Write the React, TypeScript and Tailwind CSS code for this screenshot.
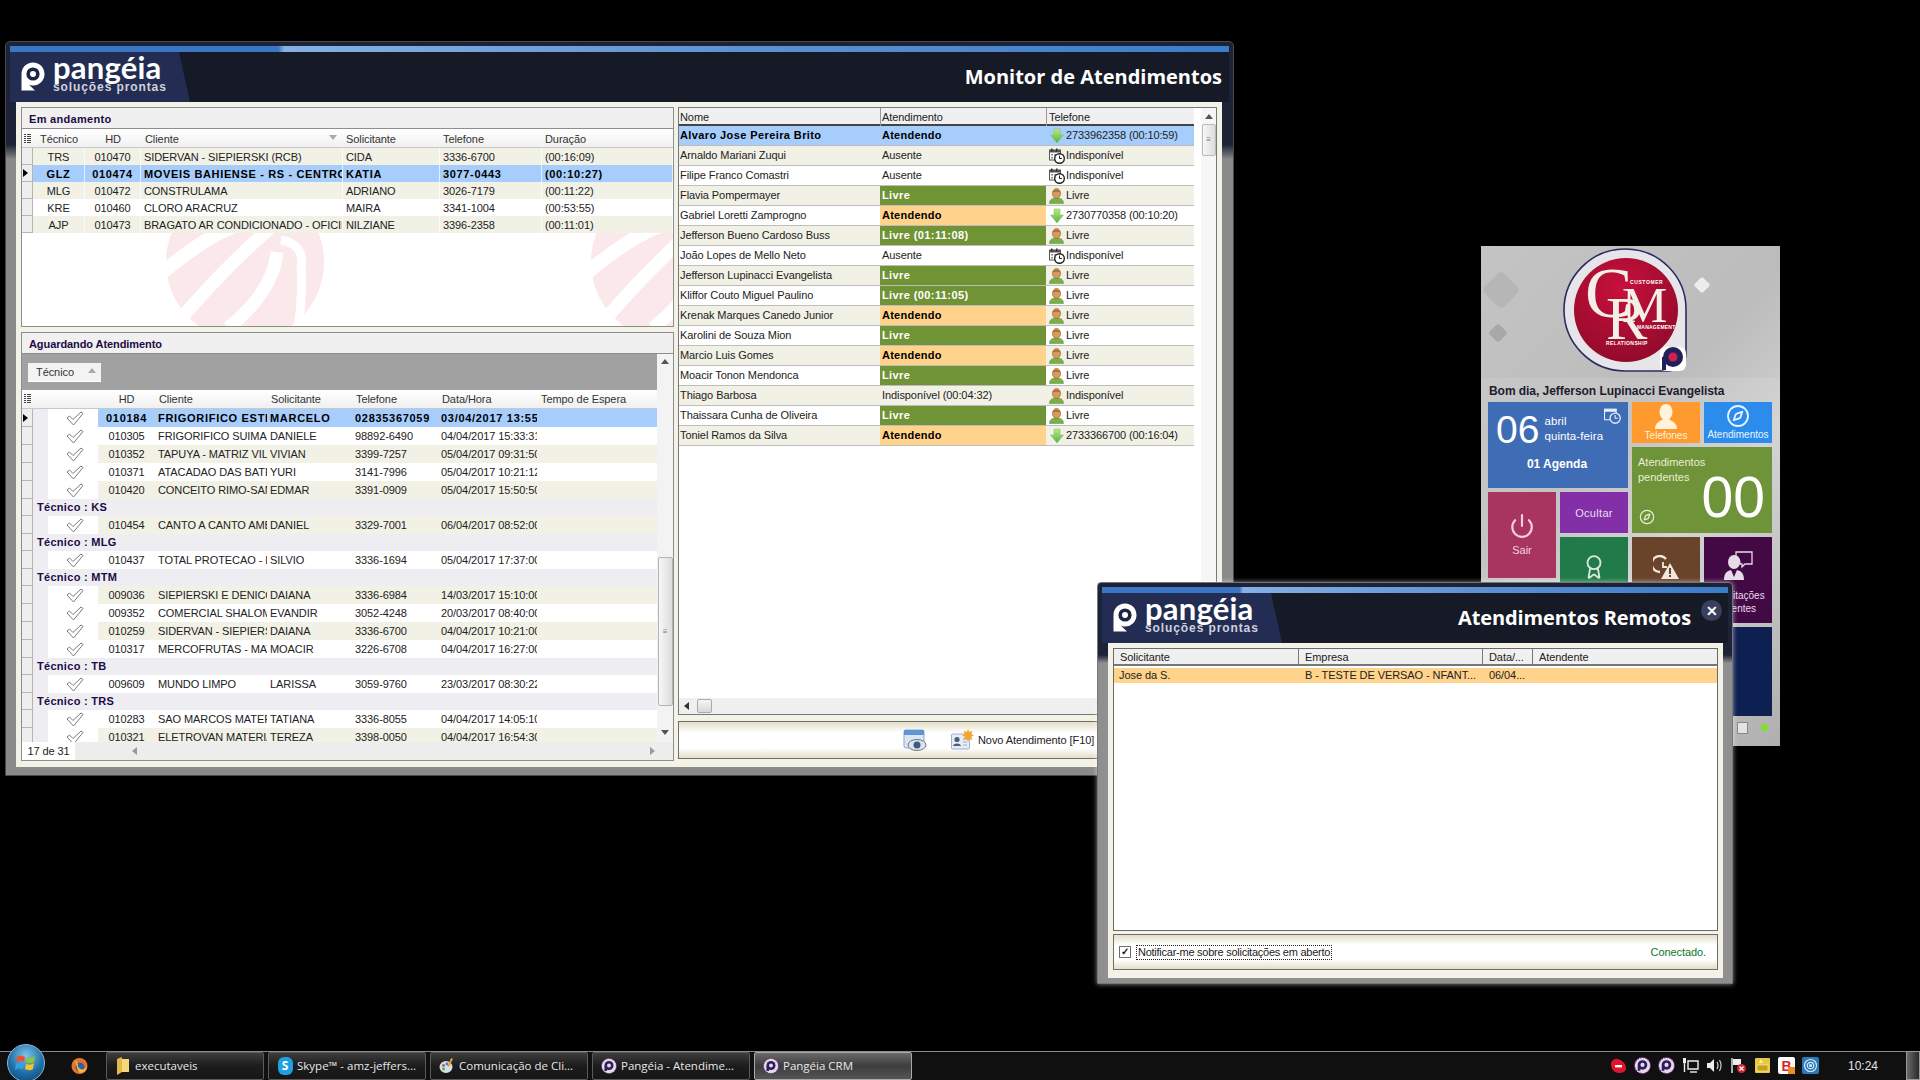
import React from 'react';
import { Award, Compass, Power } from 'lucide-react';

const active = [
  ['TRS', '010470', 'SIDERVAN - SIEPIERSKI (RCB)', 'CIDA', '3336-6700', '(00:16:09)'],
  ['GLZ', '010474', 'MOVEIS BAHIENSE - RS - CENTRO', 'KATIA', '3077-0443', '(00:10:27)'],
  ['MLG', '010472', 'CONSTRULAMA', 'ADRIANO', '3026-7179', '(00:11:22)'],
  ['KRE', '010460', 'CLORO ARACRUZ', 'MAIRA', '3341-1004', '(00:53:55)'],
  ['AJP', '010473', 'BRAGATO AR CONDICIONADO - OFICINA', 'NILZIANE', '3396-2358', '(00:11:01)'],
];

type Waiting = { group: string } | { row: string[]; bg: string; selected?: boolean };

const waiting: Waiting[] = [
  { row: ['010184', 'FRIGORIFICO ESTRELA', 'MARCELO', '02835367059', '03/04/2017 13:55:10'], bg: 'bg-[#a6cdfb]', selected: true },
  { row: ['010305', 'FRIGORIFICO SUIMAX', 'DANIELE', '98892-6490', '04/04/2017 15:33:31'], bg: 'bg-white' },
  { row: ['010352', 'TAPUYA - MATRIZ VILA', 'VIVIAN', '3399-7257', '05/04/2017 09:31:50'], bg: 'bg-[#f1f1e6]' },
  { row: ['010371', 'ATACADAO DAS BATERIAS', 'YURI', '3141-7996', '05/04/2017 10:21:12'], bg: 'bg-white' },
  { row: ['010420', 'CONCEITO RIMO-SANTOS', 'EDMAR', '3391-0909', '05/04/2017 15:50:50'], bg: 'bg-[#f1f1e6]' },
  { group: 'KS' },
  { row: ['010454', 'CANTO A CANTO AMBIENTES', 'DANIEL', '3329-7001', '06/04/2017 08:52:00'], bg: 'bg-[#f1f1e6]' },
  { group: 'MLG' },
  { row: ['010437', 'TOTAL PROTECAO - ES', 'SILVIO', '3336-1694', '05/04/2017 17:37:00'], bg: 'bg-white' },
  { group: 'MTM' },
  { row: ['009036', 'SIEPIERSKI E DENICOLI', 'DAIANA', '3336-6984', '14/03/2017 15:10:00'], bg: 'bg-[#f1f1e6]' },
  { row: ['009352', 'COMERCIAL SHALOM', 'EVANDIR', '3052-4248', '20/03/2017 08:40:00'], bg: 'bg-white' },
  { row: ['010259', 'SIDERVAN - SIEPIERSKI', 'DAIANA', '3336-6700', '04/04/2017 10:21:00'], bg: 'bg-[#f1f1e6]' },
  { row: ['010317', 'MERCOFRUTAS - MATRIZ', 'MOACIR', '3226-6708', '04/04/2017 16:27:00'], bg: 'bg-white' },
  { group: 'TB' },
  { row: ['009609', 'MUNDO LIMPO', 'LARISSA', '3059-9760', '23/03/2017 08:30:22'], bg: 'bg-white' },
  { group: 'TRS' },
  { row: ['010283', 'SAO MARCOS MATERIAIS', 'TATIANA', '3336-8055', '04/04/2017 14:05:10'], bg: 'bg-white' },
  { row: ['010321', 'ELETROVAN MATERIAIS', 'TEREZA', '3398-0050', '04/04/2017 16:54:30'], bg: 'bg-[#f1f1e6]' },
];

type Status = 'livre' | 'atendendo' | 'plain';
type Phone = 'call' | 'away' | 'user';

const people: { name: string; status: Status; label: string; phone: Phone; detail: string }[] = [
  { name: 'Alvaro Jose Pereira Brito', status: 'plain', label: 'Atendendo', phone: 'call', detail: '2733962358 (00:10:59)' },
  { name: 'Arnaldo Mariani Zuqui', status: 'plain', label: 'Ausente', phone: 'away', detail: 'Indisponível' },
  { name: 'Filipe Franco Comastri', status: 'plain', label: 'Ausente', phone: 'away', detail: 'Indisponível' },
  { name: 'Flavia Pompermayer', status: 'livre', label: 'Livre', phone: 'user', detail: 'Livre' },
  { name: 'Gabriel Loretti Zamprogno', status: 'atendendo', label: 'Atendendo', phone: 'call', detail: '2730770358 (00:10:20)' },
  { name: 'Jefferson Bueno Cardoso Buss', status: 'livre', label: 'Livre (01:11:08)', phone: 'user', detail: 'Livre' },
  { name: 'João Lopes de Mello Neto', status: 'plain', label: 'Ausente', phone: 'away', detail: 'Indisponível' },
  { name: 'Jefferson Lupinacci Evangelista', status: 'livre', label: 'Livre', phone: 'user', detail: 'Livre' },
  { name: 'Kliffor Couto Miguel Paulino', status: 'livre', label: 'Livre (00:11:05)', phone: 'user', detail: 'Livre' },
  { name: 'Krenak Marques Canedo Junior', status: 'atendendo', label: 'Atendendo', phone: 'user', detail: 'Livre' },
  { name: 'Karolini de Souza Mion', status: 'livre', label: 'Livre', phone: 'user', detail: 'Livre' },
  { name: 'Marcio Luis Gomes', status: 'atendendo', label: 'Atendendo', phone: 'user', detail: 'Livre' },
  { name: 'Moacir Tonon Mendonca', status: 'livre', label: 'Livre', phone: 'user', detail: 'Livre' },
  { name: 'Thiago Barbosa', status: 'plain', label: 'Indisponível (00:04:32)', phone: 'user', detail: 'Indisponível' },
  { name: 'Thaissara Cunha de Oliveira', status: 'livre', label: 'Livre', phone: 'user', detail: 'Livre' },
  { name: 'Toniel Ramos da Silva', status: 'atendendo', label: 'Atendendo', phone: 'call', detail: '2733366700 (00:16:04)' },
];

function Tri({ dir, color = '#555' }: { dir: 'up' | 'down' | 'left' | 'right'; color?: string }) {
  const points = { up: '0,5 4,0 8,5', down: '0,0 8,0 4,5', left: '5,0 5,8 0,4', right: '0,0 5,4 0,8' }[dir];
  return (
    <svg width="8" height="8" viewBox="0 0 8 8">
      <polygon points={points} fill={color} />
    </svg>
  );
}

function GripIcon() {
  return (
    <svg width="7" height="11" viewBox="0 0 7 11" fill="#444">
      <rect x="0" y="0" width="2" height="1" />
      <rect x="3" y="0" width="4" height="1" />
      <rect x="0" y="2" width="2" height="1" />
      <rect x="3" y="2" width="4" height="1" />
      <rect x="0" y="4" width="2" height="1" />
      <rect x="3" y="4" width="4" height="1" />
      <rect x="0" y="6" width="2" height="1" />
      <rect x="3" y="6" width="4" height="1" />
      <rect x="0" y="8" width="2" height="1" />
      <rect x="3" y="8" width="4" height="1" />
    </svg>
  );
}

function CheckIcon() {
  return (
    <svg width="18" height="15" viewBox="0 0 18 15">
      <path d="M1 7 L3.5 5 L7 8.5 L15 1 L17 2.5 L7.5 14 Z" fill="#fff" stroke="#7b7b7b" strokeWidth="1" />
    </svg>
  );
}

function CallIcon() {
  return (
    <svg width="14" height="16" viewBox="0 0 14 16">
      <defs>
        <linearGradient id="callGreen" x1="0" y1="0" x2="0" y2="1">
          <stop offset="0" stopColor="#bfe87f" />
          <stop offset="1" stopColor="#4fb648" />
        </linearGradient>
      </defs>
      <path d="M4 1 H10 V7 H13.5 L7 15 L0.5 7 H4 Z" fill="url(#callGreen)" stroke="#7cc060" strokeWidth="0.5" />
    </svg>
  );
}

function AwayIcon() {
  return (
    <svg width="16" height="16" viewBox="0 0 16 16" className="shrink-0">
      <rect x="0.5" y="2" width="11" height="10" fill="#fff" stroke="#555" />
      <rect x="0.5" y="2" width="11" height="2.5" fill="#555" />
      <rect x="2" y="0.5" width="1.5" height="3" fill="#333" />
      <rect x="7" y="0.5" width="1.5" height="3" fill="#333" />
      <rect x="2" y="6" width="2" height="1.5" fill="#888" />
      <rect x="5" y="6" width="2" height="1.5" fill="#888" />
      <rect x="2" y="9" width="2" height="1.5" fill="#888" />
      <circle cx="10.5" cy="10.5" r="4.8" fill="#fff" stroke="#222" strokeWidth="1.4" />
      <path d="M10.5 7.5 V10.5 H13" fill="none" stroke="#222" strokeWidth="1" />
    </svg>
  );
}

function UserIcon() {
  return (
    <svg width="15" height="16" viewBox="0 0 15 16">
      <path d="M0.5 15.5 C0.5 11.5 3 10.5 5.5 10 H9.5 C12 10.5 14.5 11.5 14.5 15.5 Z" fill="#78b04a" stroke="#5b8f36" strokeWidth="0.5" />
      <ellipse cx="7.5" cy="5.5" rx="4" ry="5" fill="#d89a5c" stroke="#9a6430" strokeWidth="0.7" />
      <path d="M3.5 4.5 C4 1 11 1 11.5 4.5 C9 3 6 3 3.5 4.5 Z" fill="#9a6430" />
    </svg>
  );
}

function PangeiaLogo() {
  return (
    <div className="flex items-start gap-[8px] pl-[11px] pt-[3px] text-white">
      <svg width="24" height="29" viewBox="0 0 24 29" className="mt-[7px] shrink-0">
        <path d="M12 0.5 C18.6 0.5 23.5 5.6 23.5 12 C23.5 18.6 18.4 23.5 12 23.5 C10.5 23.5 9 23.2 8 22.8 L14 28.5 H0.5 V12 C0.5 5.6 5.4 0.5 12 0.5 Z" fill="#fff" />
        <circle cx="12" cy="12" r="6.6" fill="#1c2547" />
        <circle cx="12" cy="12" r="3" fill="#fff" />
      </svg>
      <div className="flex flex-col">
        <span className="font-['Lato',sans-serif] text-[31px] font-bold leading-[24px] tracking-[0.2px]">pangéia</span>
        <span className="mt-[3px] font-['Liberation_Sans',sans-serif] text-[12px] font-bold leading-[11px] tracking-[0.9px] text-[#cfd2dc]">soluções prontas</span>
      </div>
    </div>
  );
}

function WindowHeader({ title, titleClass }: { title: string; titleClass: string }) {
  return (
    <>
      <div className="h-[6px] shrink-0 bg-[linear-gradient(90deg,#3a76c4_0,#3a76c4_22%,#86b0e2_22.5%,#5d92d2_60%,#3b7cc9_100%)]" />
      <div className="relative flex h-[50px] shrink-0 items-center justify-end bg-[#151a26]">
        <div className="absolute inset-y-0 left-0 w-[180px] bg-[#232c53] [clip-path:polygon(0_0,169px_0,180px_100%,0_100%)]">
          <PangeiaLogo />
        </div>
        <h1 className={titleClass}>{title}</h1>
      </div>
    </>
  );
}

function Watermark() {
  const mark = (cx: number) => (
    <g key={cx} transform={`translate(${cx} 133)`}>
      <circle r="79" fill="#fbe8eb" />
      <g fill="none" stroke="#fff" strokeLinecap="butt">
        <path d="M-82 10 Q-40 -25 -10 -36" strokeWidth="14" />
        <path d="M-60 52 Q-15 0 32 -40 L24 -70" strokeWidth="13" />
        <path d="M-17 66 Q28 30 32 -10" strokeWidth="13" />
        <path d="M36 -22 Q60 -18 56 6 Q58 40 52 70" strokeWidth="9" />
      </g>
    </g>
  );
  return (
    <svg className="absolute left-0 top-0" width="651" height="197" viewBox="0 0 651 197">
      {[223, 648].map(mark)}
    </svg>
  );
}

function ActivePanel() {
  const cols = 'grid grid-cols-[11px_52px_56px_202px_97px_102px_131px]';
  return (
    <section className="flex h-[220px] shrink-0 flex-col border border-[#8e8e8e]">
      <div className="flex h-[21px] shrink-0 items-center border-b border-[#8e8e8e] bg-[#f0f0f0] pl-[7px] pt-[2px] text-[11px] font-bold tracking-[0.3px] text-[#1c0b45]">
        Em andamento
      </div>
      <div className="relative flex-1 overflow-hidden bg-white">
        <Watermark />
        <div className={`${cols} relative h-[19px] items-center border-b border-[#c8c8c8] bg-[linear-gradient(#ffffff,#f0f0f0)] pt-[2px] text-[#333]`}>
          <span className="flex justify-center"><GripIcon /></span>
          <span className="text-center">Técnico</span>
          <span className="text-center">HD</span>
          <span className="flex items-center justify-between pl-[4px] pr-[6px]">Cliente <Tri dir="down" color="#aaa" /></span>
          <span className="pl-[3px]">Solicitante</span>
          <span className="pl-[3px]">Telefone</span>
          <span className="pl-[3px]">Duração</span>
        </div>
        {active.map((row, i) => {
          const selected = i === 1;
          const bg = selected ? 'bg-[#a6cdfb]' : i === 3 ? 'bg-white' : 'bg-[#f1f1e6]';
          return (
            <div key={row[1]} className={`${cols} relative h-[17px] items-center ${selected ? 'font-bold tracking-[0.65px] text-black' : 'text-[#222]'} ${bg}`}>
              <span className="flex h-full items-center justify-center border-b border-r border-[#b5b5b5] bg-[#eeeeee]">
                {selected && <Tri dir="right" color="#000" />}
              </span>
              {row.map((cell, c) => (
                <span key={c} className={`h-full overflow-hidden whitespace-nowrap border-r border-white/70 leading-[19px] ${c < 2 ? 'text-center' : 'pl-[3px]'}`}>
                  {cell}
                </span>
              ))}
            </div>
          );
        })}
      </div>
    </section>
  );
}

function WaitingPanel() {
  const cols = 'grid grid-cols-[11px_15px_50px_57px_112px_85px_86px_99px_120px]';
  return (
    <section className="flex h-[429px] shrink-0 flex-col border border-[#8e8e8e] bg-white">
      <div className="flex h-[21px] shrink-0 items-center border-b border-[#8e8e8e] bg-[#f0f0f0] pl-[7px] pt-[2px] text-[11px] font-bold text-[#1c0b45]">
        Aguardando Atendimento
      </div>
      <div className="flex h-[388px] shrink-0">
        <div className="flex w-[635px] flex-col">
          <div className="h-[36px] shrink-0 bg-[#a1a1a1] pl-[6px] pt-[9px]">
            <div className="flex h-[19px] w-[73px] items-center justify-between border-b border-white bg-[#f3f3f3] pl-[8px] pr-[5px] text-[#333]">
              Técnico <Tri dir="up" color="#aaa" />
            </div>
          </div>
          <div className={`${cols} h-[19px] shrink-0 items-center border-b border-[#c8c8c8] bg-[linear-gradient(#ffffff,#f0f0f0)] text-[#333]`}>
            <span className="flex justify-center"><GripIcon /></span>
            <span />
            <span />
            <span className="text-center">HD</span>
            <span className="pl-[4px]">Cliente</span>
            <span className="pl-[4px]">Solicitante</span>
            <span className="pl-[4px]">Telefone</span>
            <span className="pl-[4px]">Data/Hora</span>
            <span className="pl-[4px]">Tempo de Espera</span>
          </div>
          <div className="flex-1 overflow-hidden">
            {waiting.map((item, i) =>
              'group' in item ? (
                <div key={i} className="flex h-[17px] items-center">
                  <span className="h-full w-[11px] shrink-0 border-b border-r border-[#b5b5b5] bg-[#eeeeee]" />
                  <span className="flex h-full flex-1 items-center bg-[#eeeef2] pl-[4px] font-bold tracking-[0.3px] text-[#1c0b45]">Técnico : {item.group}</span>
                </div>
              ) : (
                <div key={i} className={`${cols} h-[18px] items-center ${item.selected ? 'font-bold tracking-[0.7px] text-black' : 'text-[#222]'}`}>
                  <span className="flex h-full items-center justify-center border-b border-r border-[#b5b5b5] bg-[#eeeeee]">
                    {item.selected && <Tri dir="right" color="#000" />}
                  </span>
                  <span className="h-full bg-[#eeeef2]" />
                  <span className="flex h-full items-center justify-center bg-white pl-[3px]"><CheckIcon /></span>
                  <span className={`h-full text-center leading-[18px] ${item.bg}`}>{item.row[0]}</span>
                  {item.row.slice(1).map((cell, c) => (
                    <span key={c} className={`h-full overflow-hidden whitespace-nowrap pl-[3px] pr-[2px] leading-[18px] ${item.bg}`}>{cell}</span>
                  ))}
                  <span className={`h-full ${item.bg}`} />
                </div>
              ),
            )}
          </div>
        </div>
        <div className="flex w-[16px] flex-col items-center bg-[#f3f3f3] pb-[4px] pt-[5px]">
          <Tri dir="up" />
          <div className="mt-[190px] flex h-[149px] w-[15px] items-center justify-center rounded-[2px] border border-[#b4b4b4] bg-[linear-gradient(90deg,#f7f7f7,#dcdcdc)] text-[8px] leading-none text-[#777]">≡</div>
          <div className="mt-auto"><Tri dir="down" /></div>
        </div>
      </div>
      <div className="flex h-[18px] shrink-0 items-center bg-[#ededed]">
        <span className="flex h-full w-[53px] items-center justify-center bg-white text-[#222]">17 de 31</span>
        <span className="ml-[57px]"><Tri dir="left" color="#999" /></span>
        <span className="ml-[510px]"><Tri dir="right" color="#999" /></span>
      </div>
    </section>
  );
}

function PeopleGrid() {
  const cols = 'grid grid-cols-[201px_166px_148px]';
  const statusClass = { livre: 'bg-[#6f9335] font-bold text-white tracking-[0.4px]', atendendo: 'bg-[#ffd38c] font-bold text-black tracking-[0.25px]', plain: '' };
  return (
    <section className="flex h-[608px] shrink-0 flex-col border border-[#777] bg-white">
      <div className="flex min-h-0 flex-1">
        <div className="w-[515px] shrink-0">
          <div className={`${cols} h-[18px] border-b-2 border-[#444] bg-[#f0f0f0] text-[#222]`}>
            <span className="pl-[1px] leading-[18px]">Nome</span>
            <span className="border-l border-[#999] pl-[1px] leading-[18px]">Atendimento</span>
            <span className="border-l border-[#999] pl-[2px] leading-[18px]">Telefone</span>
          </div>
          {people.map((p, i) => {
            const selected = i === 0;
            const bg = selected ? 'bg-[#a6cdfb]' : i % 2 === 1 ? 'bg-[#f1f1e6]' : 'bg-white';
            return (
              <div key={p.name} className={`${cols} h-[20px] border-b border-[#bdbdbd] text-[#222] ${bg} ${selected ? 'font-bold text-black' : ''}`}>
                <span className={`overflow-hidden whitespace-nowrap pl-[1px] leading-[19px] ${selected ? 'tracking-[0.4px]' : ''}`}>{p.name}</span>
                <span className={`pl-[2px] leading-[19px] ${statusClass[p.status]} ${selected ? 'tracking-[0.25px]' : ''}`}>{p.label}</span>
                <span className={`flex items-center gap-[2px] pl-[3px] font-normal tracking-[-0.12px] ${selected ? 'text-[#222]' : ''}`}>
                  <span className="flex w-[15px] shrink-0 justify-center">
                    {p.phone === 'call' ? <CallIcon /> : p.phone === 'away' ? <AwayIcon /> : <UserIcon />}
                  </span>
                  {p.detail}
                </span>
              </div>
            );
          })}
        </div>
        <div className="flex flex-1 justify-end">
          <div className="flex w-[15px] flex-col items-center bg-[#f6f6f6] pt-[6px]">
            <Tri dir="up" />
            <div className="mt-[2px] flex h-[32px] w-[14px] items-center justify-center rounded-[2px] border border-[#bbb] bg-[linear-gradient(90deg,#f7f7f7,#dcdcdc)] text-[8px] leading-none text-[#777]">≡</div>
          </div>
        </div>
      </div>
      <div className="flex h-[16px] shrink-0 items-center bg-[#efefef] pl-[5px]">
        <Tri dir="left" color="#333" />
        <span className="ml-[5px] h-[14px] w-[15px] rounded-[2px] border border-[#aaa] bg-[linear-gradient(#f5f5f5,#d8d8d8)]" />
      </div>
    </section>
  );
}

function Toolbar({ className, children }: { className: string; children: React.ReactNode }) {
  return (
    <div className={`flex shrink-0 items-center border border-[#6e6e6e] bg-[linear-gradient(#e4ddc6,#ffffff_30%,#ffffff_72%,#e4ddc6)] ${className}`}>
      {children}
    </div>
  );
}

function MainWindow() {
  return (
    <div className="absolute left-[5px] top-[41px] flex h-[735px] w-[1229px] flex-col rounded-t-[5px] border border-[#4a4a4a] bg-[linear-gradient(#1d2336,#1d2336_14%,#8a8a8a_16%,#8a8a8a)] px-[4px] pt-[4px]">
      <WindowHeader title="Monitor de Atendimentos" titleClass="pr-[7px] font-['Open_Sans',sans-serif] text-[20px] font-bold tracking-normal text-white" />
      <div className="mb-[8px] ml-[6px] mr-[7px] flex min-h-0 flex-1 gap-[4px] bg-[#f2f2e6] pb-[5px] pl-[5px] pr-[5px] pt-[5px]">
        <div className="flex w-[653px] flex-col gap-[5px]">
          <ActivePanel />
          <WaitingPanel />
        </div>
        <div className="flex w-[539px] flex-col gap-[6px]">
          <PeopleGrid />
          <Toolbar className="h-[38px] pl-[224px]">
            <svg width="24" height="23" viewBox="0 0 24 23" className="mr-[24px] shrink-0">
              <rect x="1" y="1" width="20" height="18" rx="2" fill="#dbe6f3" stroke="#8ba6c8" />
              <rect x="1" y="1" width="20" height="5" fill="#5d95d5" />
              <ellipse cx="14" cy="16" rx="9" ry="5.5" fill="#dfe4ea" stroke="#6b7685" />
              <circle cx="14" cy="16" r="3.5" fill="#3c5a82" />
            </svg>
            <svg width="23" height="22" viewBox="0 0 23 22" className="mr-[4px] shrink-0">
              <rect x="0.5" y="5" width="18" height="15" rx="1" fill="#e4ecf7" stroke="#9db3d2" />
              <circle cx="6" cy="10.5" r="2.6" fill="#4d5d78" />
              <path d="M2 17 C2 13.5 10 13.5 10 17 Z" fill="#4d5d78" />
              <path d="M12 10 H16 M12 13 H16 M12 16 H16" stroke="#9db3d2" />
              <path d="M17 0 L18.3 3 L21.5 1.7 L20.3 5 L23 6.4 L20.3 7.6 L21.5 11 L18.3 9.7 L17 13 L15.7 9.7 L12.5 11 L13.7 7.6 L11 6.4 L13.7 5 L12.5 1.7 L15.7 3 Z" fill="#f0a62f" />
            </svg>
            <span className="whitespace-nowrap text-[#222]">Novo Atendimento [F10]</span>
          </Toolbar>
        </div>
      </div>
    </div>
  );
}

function RemoteWindow() {
  const cols = 'grid grid-cols-[185px_184px_50px_1fr]';
  return (
    <div className="absolute left-[1097px] top-[582px] flex h-[402px] w-[636px] flex-col rounded-t-[4px] border border-[#777] bg-[linear-gradient(#1d2336,#1d2336_18%,#8f8f8f_20%,#8f8f8f)] px-[4px] pt-[4px] shadow-[0_0_5px_rgba(255,255,255,0.55)]">
      <WindowHeader title="Atendimentos Remotos" titleClass="pr-[37px] font-['Open_Sans',sans-serif] text-[20px] font-bold tracking-[-0.1px] text-white" />
      <div className="absolute left-[603px] top-[17px] flex h-[21px] w-[21px] items-center justify-center rounded-full bg-[#38405a] text-[14px] font-bold leading-none text-white">✕</div>
      <div className="mb-[5px] ml-[6px] mr-[5px] flex min-h-0 flex-1 flex-col gap-[3px] bg-[#f2f2e6] px-[5px] pb-[5px] pt-[5px]">
        <div className="flex h-[283px] shrink-0 flex-col border border-[#6a6a6a] bg-white">
          <div className={`${cols} h-[17px] border-b-2 border-[#777] bg-[#f0f0f0] text-[#222]`}>
            <span className="border-r border-[#777] pl-[6px] leading-[17px]">Solicitante</span>
            <span className="border-r border-[#777] pl-[6px] leading-[17px]">Empresa</span>
            <span className="border-r border-[#777] pl-[6px] leading-[17px]">Data/...</span>
            <span className="pl-[6px] leading-[17px]">Atendente</span>
          </div>
          <div className={`${cols} mt-[2px] h-[15px] bg-[#ffd38c] text-[#222]`}>
            <span className="pl-[5px] leading-[15px]">Jose da S.</span>
            <span className="pl-[6px] leading-[15px]">B - TESTE DE VERSAO - NFANT...</span>
            <span className="pl-[6px] leading-[15px]">06/04...</span>
            <span />
          </div>
        </div>
        <Toolbar className="h-[36px] justify-between pl-[5px] pr-[11px]">
          <div className="flex items-center gap-[5px]">
            <span className="flex h-[12px] w-[12px] items-center justify-center border border-[#6f6f6f] bg-white text-[10px] font-bold leading-none text-[#111]">✓</span>
            <span className="whitespace-nowrap border border-dotted border-[#222] px-[1px] leading-[13px] tracking-[-0.25px] text-[#222]">Notificar-me sobre solicitações em aberto</span>
          </div>
          <span className="text-[#0b7a1e]">Conectado.</span>
        </Toolbar>
      </div>
    </div>
  );
}

function CrmBadge() {
  return (
    <div className="relative h-[132px] shrink-0">
      <svg className="absolute left-[69px] top-[1px]" width="146" height="130" viewBox="0 0 146 130">
        <defs>
          <radialGradient id="crmRed" cx="0.45" cy="0.3" r="0.8">
            <stop offset="0" stopColor="#c8103c" />
            <stop offset="1" stopColor="#8c0a28" />
          </radialGradient>
        </defs>
        <path d="M75 2 C110 2 136 30 136 62 V105 C136 118 128 124 116 124 H75 C41 124 14 96 14 63 C14 30 41 2 75 2 Z" fill="#e6e6ea" stroke="#2b2d5e" strokeWidth="1.6" />
        <circle cx="76" cy="63" r="52" fill="url(#crmRed)" />
        <rect x="110" y="100" width="26" height="24" rx="6" fill="#fff" />
        <circle cx="123" cy="110" r="10" fill="#20215a" />
        <circle cx="123" cy="110" r="4.5" fill="#d02050" />
        <rect x="112" y="110" width="4" height="13" fill="#20215a" />
      </svg>
      <span className="absolute left-[104px] top-[12px] font-['Liberation_Serif',serif] text-[71px] leading-none text-[#f2eee8]">C</span>
      <span className="absolute left-[125px] top-[41px] font-['Liberation_Serif',serif] text-[62px] leading-none text-[#f2eee8]">R</span>
      <span className="absolute left-[141px] top-[34px] font-['Liberation_Serif',serif] text-[51px] leading-none text-[#f2eee8]">M</span>
      <span className="absolute left-[149px] top-[33px] text-[5px] font-bold leading-[6px] tracking-[0.6px] text-white">CUSTOMER</span>
      <span className="absolute left-[156px] top-[78px] text-[5px] font-bold leading-[6px] tracking-[0.2px] text-white">MANAGEMENT</span>
      <span className="absolute left-[125px] top-[94px] text-[5px] font-bold leading-[6px] tracking-[0.4px] text-white">RELATIONSHIP</span>
    </div>
  );
}

function CrmWidget() {
  const tile = 'flex flex-col items-center justify-center text-center';
  return (
    <div className="absolute left-[1481px] top-[246px] flex h-[500px] w-[299px] flex-col overflow-hidden bg-[linear-gradient(135deg,#c4c4c4,#bcbcbc_40%,#cfcfcf_60%,#a6a6a6)] font-['Liberation_Sans',sans-serif] tracking-normal">
      <span className="absolute left-[215px] top-[33px] h-[12px] w-[12px] rotate-45 rounded-[2px] bg-[#ececec]" />
      <span className="absolute left-[6px] top-[30px] h-[28px] w-[28px] rotate-45 rounded-[5px] bg-[#b6b6b6]" />
      <span className="absolute left-[10px] top-[80px] h-[14px] w-[14px] rotate-45 rounded-[3px] bg-[#a8a8a8]" />
      <CrmBadge />
      <div className="relative flex-1 bg-white/10">
        <p className="h-[24px] pl-[8px] pt-[6px] text-[12px] font-bold leading-[15px] tracking-[-0.05px] text-[#1c1c2e]">Bom dia, Jefferson Lupinacci Evangelista</p>
        <div className="ml-[7px] grid grid-cols-[68px_68px_68px_68px] grid-rows-[41px_41px_41px_41px_41px_89px] gap-x-[4px] gap-y-[4px]">
          <div className="relative col-span-2 row-span-2 bg-[#3f6db5] text-white">
            <div className="flex items-start pl-[8px] pt-[9px]">
              <span className="text-[39px] leading-[38px]">06</span>
              <span className="pl-[5px] pt-[3px] text-[11.5px] leading-[15px] tracking-[0.1px]">abril<br />quinta-feira</span>
            </div>
            <p className="mt-[6px] pr-[2px] text-center text-[12px] font-bold">01 Agenda</p>
            <span className="absolute right-[7px] top-[5px]">
              <svg width="17" height="17" viewBox="0 0 16 16">
                <rect x="0.5" y="2" width="11" height="10" fill="none" stroke="#e6eef8" />
                <rect x="0.5" y="2" width="11" height="2.5" fill="#e6eef8" />
                <circle cx="10.5" cy="10.5" r="4.8" fill="#3f6db5" stroke="#e6eef8" strokeWidth="1.2" />
                <path d="M10.5 7.5 V10.5 H13" fill="none" stroke="#e6eef8" />
              </svg>
            </span>
          </div>
          <div className={`${tile} bg-[#ff9a2f] text-[#fff3dc]`}>
            <svg width="24" height="25" viewBox="0 0 24 25" fill="#fff3dc">
              <ellipse cx="12" cy="8" rx="6.5" ry="8" />
              <path d="M1 25 C1 18 7 17 9 15 H15 C17 17 23 18 23 25 Z" />
            </svg>
            <span className="text-[10px] leading-[13px]">Telefones</span>
          </div>
          <div className={`${tile} bg-[#2b8cec] text-[#e9f4ff]`}>
            <Compass size={24} strokeWidth={1.8} />
            <span className="text-[10px] leading-[14px]">Atendimentos</span>
          </div>
          <div className="relative col-span-2 row-span-2 bg-[#6f9338] pl-[6px] pt-[8px] text-[11px] leading-[15px] text-[#e8efd4]">
            <p>Atendimentos</p>
            <p>pendentes</p>
            <Compass size={16} strokeWidth={1.8} className="absolute bottom-[8px] left-[7px]" />
            <span className="absolute right-[7px] top-[22px] text-[57px] leading-[57px] text-white">00</span>
          </div>
          <div className="row-span-2 flex flex-col items-center bg-[#a7355f] pt-[21px] text-[#f6cfdc]">
            <Power size={26} strokeWidth={2} />
            <span className="mt-[4px] text-[11px] leading-[14px]">Sair</span>
          </div>
          <div className={`${tile} bg-[#8330a8] pt-[1px] text-[11px] tracking-[0.3px] text-[#ecdcf4]`}>Ocultar</div>
          <div className="row-span-2 flex justify-center bg-[#217a49] pt-[17px] text-[#d9e8dc]">
            <Award size={26} strokeWidth={1.7} />
          </div>
          <div className="row-span-2 flex justify-center bg-[#69432a] pt-[18px]">
            <svg width="26" height="26" viewBox="0 0 26 26" fill="none">
              <path d="M13 4 A8 8 0 1 0 7 17" stroke="#eee7df" strokeWidth="2.4" />
              <path d="M10 7 V12 H14" stroke="#eee7df" strokeWidth="1.8" />
              <path d="M17 8 L26 24 H8 Z" fill="#eee7df" />
              <rect x="16" y="13" width="2" height="6" fill="#69432a" />
              <rect x="16" y="20" width="2" height="2" fill="#69432a" />
            </svg>
          </div>
          <div className={`${tile} row-span-2 bg-[#420945] pt-[5px] text-[10px] leading-[13px] text-[#eadcec]`}>
            <svg width="30" height="30" viewBox="0 0 30 30" fill="#e6dbe8" className="mb-[8px]">
              <path d="M13 1 H29 V13 H22 L19 16 V13 H17 C17 9 15 6 13 5 Z" fill="none" stroke="#e6dbe8" strokeWidth="1.3" />
              <ellipse cx="11" cy="11" rx="6" ry="7" />
              <path d="M1 29 C1 22 4 20 8 19 L11 26 L14 19 C18 20 21 22 21 29 Z" />
            </svg>
            <span>Solicitações</span>
            <span>Clientes</span>
          </div>
          <div className="col-start-4 bg-[#0e2052]" />
        </div>
        <span className="absolute left-[256px] top-[344px] h-[12px] w-[11px] border border-[#888] bg-[#e3e3e3]" />
        <span className="absolute left-[280px] top-[346px] h-[7px] w-[7px] rounded-full bg-[#7fe02a]" />
      </div>
    </div>
  );
}

function PangeiaTaskIcon({ size = 16 }: { size?: number }) {
  return (
    <svg width={size} height={size} viewBox="0 0 16 16">
      <circle cx="8" cy="8" r="7.5" fill="#e8d8ea" stroke="#6a2a7a" strokeDasharray="1.5 1" />
      <circle cx="8" cy="7.5" r="4.5" fill="#2a1f5a" />
      <circle cx="8" cy="7.5" r="2" fill="#e8d8ea" />
      <rect x="3.5" y="8" width="2.5" height="5" fill="#2a1f5a" />
    </svg>
  );
}

function Taskbar() {
  const buttons: { label: string; icon: React.ReactNode; on?: boolean }[] = [
    {
      label: 'executaveis',
      icon: (
        <svg width="14" height="18" viewBox="0 0 14 18">
          <path d="M1 2 L6 0 V15 L1 18 Z" fill="#e4b94a" />
          <path d="M6 2 H13 V15 H6 Z" fill="#f4d87e" />
        </svg>
      ),
    },
    {
      label: 'Skype™ - amz-jeffers...',
      icon: <span className="flex h-[18px] w-[15px] items-center justify-center rounded-[6px] bg-[#1fa0e0] text-[12px] font-bold text-white">S</span>,
    },
    {
      label: 'Comunicação de Cli...',
      icon: (
        <svg width="16" height="16" viewBox="0 0 16 16">
          <ellipse cx="7" cy="9" rx="6.5" ry="6" fill="#d8dde4" />
          <circle cx="4.5" cy="7.5" r="1.4" fill="#e24a3b" />
          <circle cx="8" cy="6" r="1.4" fill="#3b7de2" />
          <circle cx="4.5" cy="11" r="1.4" fill="#3bb44a" />
          <path d="M12 0 L14 1 L10 9 L8.5 8 Z" fill="#e0a030" />
        </svg>
      ),
    },
    { label: 'Pangéia - Atendime...', icon: <PangeiaTaskIcon /> },
    { label: 'Pangéia CRM', icon: <PangeiaTaskIcon />, on: true },
  ];
  return (
    <footer className="relative flex h-[29px] shrink-0 border-t border-[#8a8a8a] bg-[#101010] font-['Open_Sans',sans-serif] text-[11.5px] tracking-normal text-[#e8e8e8]">
      <div className="absolute left-[7px] top-[-8px] h-[38px] w-[38px] rounded-full border border-[#8fb8d8] bg-[radial-gradient(circle_at_50%_30%,#7fc4e8,#1f6fa8_55%,#0c3f6a)]">
        <svg width="36" height="36" viewBox="0 0 36 36">
          <path d="M9 12 C12 10 14 11 17 12 L16 17 C13 16 11 15 8 17 Z" fill="#e8552c" />
          <path d="M19 12 C22 13 24 13 27 11 L26 17 C23 19 21 18 18 17 Z" fill="#8cc63f" />
          <path d="M8 19 C11 17 13 18 16 19 L15 24 C12 23 10 23 7 25 Z" fill="#35a0e0" />
          <path d="M18 19 C21 20 23 20 26 18 L25 24 C22 26 20 25 17 24 Z" fill="#f7c325" />
        </svg>
      </div>
      <div className="flex w-[106px] shrink-0 items-center justify-end pr-[18px]">
        <svg width="17" height="18" viewBox="0 0 17 18">
          <circle cx="8.5" cy="9" r="8" fill="#e8742a" />
          <circle cx="9" cy="10" r="4.5" fill="#2f5fa8" />
          <path d="M3 3 C6 6 5 12 9 16 C13 16 16 13 16 9 C14 14 8 13 7 9 C7 6 6 4 3 3 Z" fill="#f7b733" />
        </svg>
      </div>
      <div className="flex gap-[4px]">
        {buttons.map(b => (
          <div
            key={b.label}
            className={`flex h-[28px] w-[158px] items-center gap-[4px] rounded-[2px] border pl-[8px] ${
              b.on ? 'border-[#aaaaaa] bg-[linear-gradient(#6a6a6a,#3d3d3d_50%,#555555)]' : 'border-[#5a5a5a] bg-[linear-gradient(#3d3d3d,#1c1c1c_50%,#161616)]'
            }`}
          >
            <span className="flex w-[16px] shrink-0 justify-center">{b.icon}</span>
            <span className="whitespace-nowrap">{b.label}</span>
          </div>
        ))}
      </div>
      <div className="flex flex-1 items-center justify-end pb-[1px]">
        <div className="mr-[29px] flex items-center gap-[7px]">
          <svg width="17" height="16" viewBox="0 0 17 16">
            <path d="M5 1 C8 -0.5 16 4 16 10 C16 14 12 15 9 15 C4 15 1 11 1 6 C1 3 3 2 5 1 Z" fill="#e0142c" />
            <rect x="5" y="7" width="7" height="2.4" fill="#fff" />
          </svg>
          <PangeiaTaskIcon size={17} />
          <PangeiaTaskIcon size={17} />
          <svg width="17" height="17" viewBox="0 0 17 17" fill="none" stroke="#eee" strokeWidth="1.4">
            <path d="M6 4 H16 V12 H6 Z" />
            <path d="M8 15 H15" />
            <rect x="1" y="1" width="3" height="5" fill="#eee" stroke="none" />
            <path d="M2.5 6 V15" />
          </svg>
          <svg width="17" height="17" viewBox="0 0 17 17">
            <path d="M1 6 H4 L8 2 V15 L4 11 H1 Z" fill="#eee" />
            <path d="M11 5 Q13 8.5 11 12 M13.5 3 Q16.5 8.5 13.5 14" fill="none" stroke="#ccc" strokeWidth="1.2" />
          </svg>
          <svg width="17" height="17" viewBox="0 0 17 17">
            <path d="M2 1 V16" stroke="#eee" strokeWidth="1.4" />
            <path d="M3 2 H11 V8 H3 Z" fill="#eee" />
            <circle cx="11.5" cy="11.5" r="4.5" fill="#d8242c" />
            <path d="M9.5 9.5 L13.5 13.5 M13.5 9.5 L9.5 13.5" stroke="#fff" strokeWidth="1.3" />
          </svg>
          <svg width="17" height="17" viewBox="0 0 17 17">
            <rect x="1" y="1" width="15" height="15" rx="1" fill="#e8c840" />
            <rect x="3" y="8" width="11" height="6" fill="#c8a020" stroke="#fff3b0" strokeWidth="0.6" />
            <path d="M5 6 L7 2 L9 6 Z" fill="#fff3b0" />
          </svg>
          <span className="relative flex h-[17px] w-[17px] items-center justify-center rounded-[2px] bg-white font-['Liberation_Sans',sans-serif] text-[14px] font-bold leading-none text-[#d8242c]">
            B
            <span className="absolute bottom-0 right-0 h-[7px] w-[7px] bg-[#f08a24]" />
          </span>
          <svg width="17" height="17" viewBox="0 0 17 17" fill="none" stroke="#cfe6f8" strokeWidth="1.2">
            <rect x="0" y="0" width="17" height="17" rx="2" fill="#2a7ab8" stroke="none" />
            <circle cx="8.5" cy="8.5" r="6" />
            <circle cx="8.5" cy="8.5" r="3.2" />
            <circle cx="8.5" cy="8.5" r="1" fill="#cfe6f8" />
          </svg>
        </div>
        <span className="mr-[28px] font-['Liberation_Sans',sans-serif] text-[12px] text-[#e4e4e4]">10:24</span>
        <div className="h-[29px] w-[14px] border border-[#999] bg-[linear-gradient(90deg,#6a6a6a,#2a2a2a)]" />
      </div>
    </footer>
  );
}

export default function App() {
  return (
    <div className="flex h-[1080px] w-[1920px] flex-col overflow-hidden bg-black font-['Liberation_Sans',sans-serif] text-[11px] tracking-[-0.08px] text-[#222]">
      <main className="relative flex-1">
        <CrmWidget />
        <MainWindow />
        <RemoteWindow />
      </main>
      <Taskbar />
    </div>
  );
}
